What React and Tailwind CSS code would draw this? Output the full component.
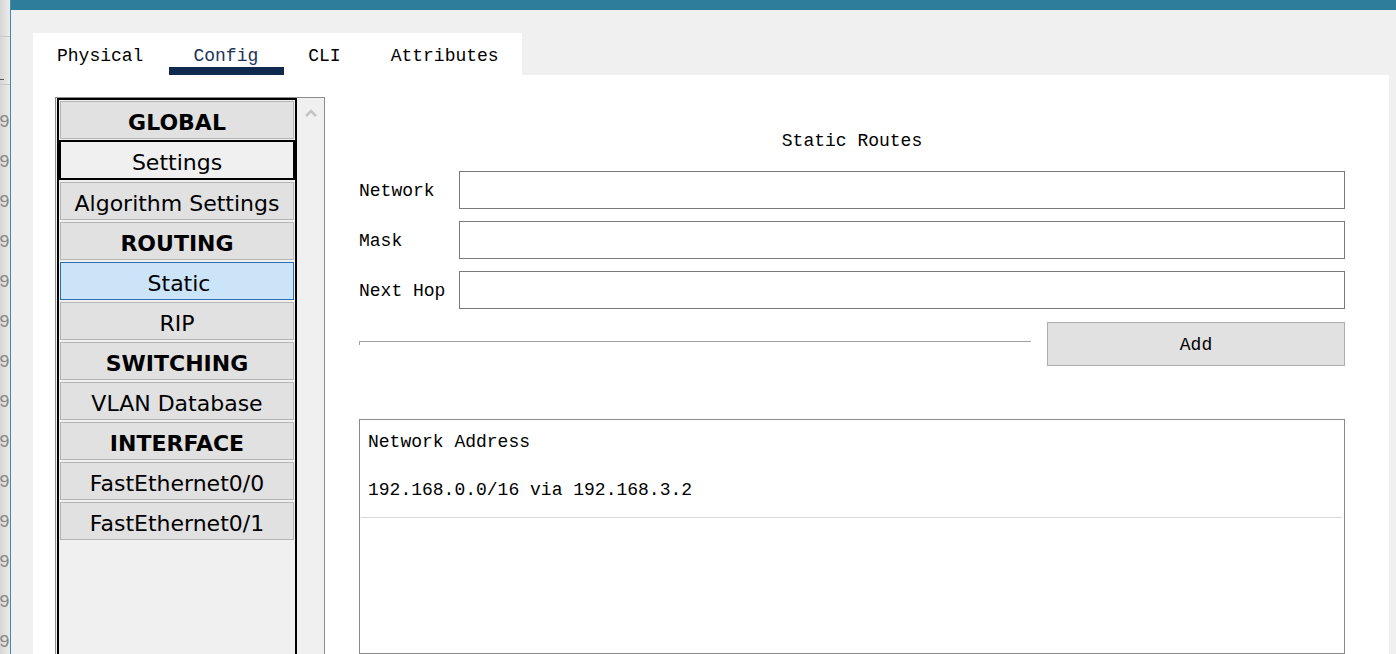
import React from 'react';

const mono = "font-['Liberation_Mono',monospace]";
const sans = "font-['DejaVu_Sans',sans-serif]";

const tabs = ['Physical', 'Config', 'CLI', 'Attributes'];

const navItems = [
  { label: 'GLOBAL', kind: 'header' },
  { label: 'Settings', kind: 'selected' },
  { label: 'Algorithm Settings' },
  { label: 'ROUTING', kind: 'header' },
  { label: 'Static', kind: 'active' },
  { label: 'RIP' },
  { label: 'SWITCHING', kind: 'header' },
  { label: 'VLAN Database' },
  { label: 'INTERFACE', kind: 'header' },
  { label: 'FastEthernet0/0' },
  { label: 'FastEthernet0/1' },
];

const sideDigits = ['96', '91', '92', '93', '94', '95', '96', '97', '98', '99', '90', '91', '92', '93'];

const NavItem = ({ label, kind }) => {
  if (kind === 'selected') {
    return (
      <div className={`mt-[1px] flex h-[40px] items-center justify-center border-2 border-black bg-[#f0f0f0] pt-[4px] text-[22px] text-black ${sans}`}>
        {label}
      </div>
    );
  }
  if (kind === 'active') {
    return (
      <div className={`mx-[1px] mt-[2px] flex h-[38px] items-center justify-center border border-[#2f6fb0] bg-[#cce4f7] pl-[4px] pt-[4px] text-[22px] text-black ${sans}`}>
        {label}
      </div>
    );
  }
  return (
    <div
      className={`mx-[1px] flex h-[38px] items-center justify-center border border-[#b4b4b4] bg-[#e1e1e1] pt-[4px] text-[22px] text-black ${sans} ${
        kind === 'header' ? 'font-bold' : ''
      } ${label === 'GLOBAL' ? 'mt-[1px]' : 'mt-[2px]'}`}
    >
      {label}
    </div>
  );
};

const FieldRow = ({ label }) => (
  <div className="flex h-[38px] items-center">
    <div className={`w-[100px] pt-[3px] text-[18px] text-black ${mono}`}>{label}</div>
    <div className="h-full flex-1 border border-[#7a7a7a] bg-white" />
  </div>
);

export default function App() {
  return (
    <div className="flex h-[654px] w-[1396px] overflow-hidden bg-[#f0f0f0]">
      {/* window behind, cut off at the left */}
      <div className="relative w-[10px] shrink-0 overflow-hidden bg-gradient-to-r from-[#d6d6d6] to-[#ececec]">
        <div className="mt-[36px] h-[1px] bg-[#c8c8c8]" />
        <div className="mt-[42px] ml-0 h-[1px] w-[4px] bg-[#555]" />
        <div className="mt-[4px] h-[1px] bg-[#c8c8c8]" />
        <div className={`-ml-[1px] mt-[17px] flex flex-col text-[18px] leading-[40px] text-[#8a8a8a] ${mono}`}>
          {sideDigits.map((d, i) => (
            <span key={i} className="whitespace-nowrap">{d}</span>
          ))}
        </div>
      </div>

      {/* main window */}
      <div className="flex min-w-0 flex-1 flex-col border-l border-[#3c8eb0]">
        <div className="h-[10px] shrink-0 bg-[#2e7d9b]" />
        <div className="flex min-h-0 flex-1 flex-col pl-[22px] pr-[7px] pt-[23px]">
          {/* tabs */}
          <div className="flex h-[42px] w-[489px] shrink-0 bg-white">
            {tabs.map((t) => (
              <div key={t} className="flex flex-col pl-6 pr-[26px]">
                <div
                  className={`flex h-[34px] items-center pt-[11px] text-[18px] leading-[24px] ${mono} ${
                    t === 'Config' ? 'text-[#1b3457]' : 'text-black'
                  }`}
                >
                  {t}
                </div>
                <div className={`-ml-6 -mr-[26px] h-[8px] ${t === 'Config' ? 'bg-[#0f2a4e]' : ''}`} />
              </div>
            ))}
          </div>

          {/* content */}
          <div className="flex min-h-0 flex-1 overflow-hidden bg-white pl-[22px] pt-[22px]">
            {/* left nav */}
            <div className="flex h-[600px] w-[270px] shrink-0 border border-[#8c8c8c] bg-[#f0f0f0] pl-[1px]">
              <div className="flex w-[240px] flex-col border-2 border-black bg-[#f0f0f0]">
                {navItems.map((it) => (
                  <NavItem key={it.label} {...it} />
                ))}
              </div>
              <div className="flex flex-1 justify-center pt-[10px]">
                <svg width="14" height="10" viewBox="0 0 14 10">
                  <polyline points="2,8 7,3 12,8" fill="none" stroke="#c4c4c4" strokeWidth="2.5" />
                </svg>
              </div>
            </div>

            {/* right form */}
            <div className="ml-[34px] mr-[44px] flex min-w-0 flex-1 flex-col pt-[32px]">
              <div className={`h-[24px] text-center text-[18px] leading-[24px] text-black ${mono}`}>Static Routes</div>
              <div className="mt-[18px] flex flex-col gap-[12px]">
                <FieldRow label="Network" />
                <FieldRow label="Mask" />
                <FieldRow label="Next Hop" />
              </div>
              <div className="mt-[13px] flex h-[44px] items-start">
                <div className="mt-[19px] flex h-[4px] flex-1 border-l border-t border-[#a0a0a0]" />
                <button className={`ml-[16px] h-[44px] w-[298px] border border-[#adadad] bg-[#e1e1e1] pt-[2px] text-[18px] text-black ${mono}`}>
                  Add
                </button>
              </div>
              <div className="mt-[53px] h-[300px] border border-[#8a8a8a] bg-white">
                <div className={`pl-[8px] pt-[10px] text-[18px] leading-[24px] text-black ${mono}`}>Network Address</div>
                <div className={`mt-[24px] pl-[8px] text-[18px] leading-[24px] text-black ${mono}`}>
                  192.168.0.0/16 via 192.168.3.2
                </div>
                <div className="ml-[1px] mr-[2px] mt-[15px] h-[1px] bg-[#d9d9d9]" />
              </div>
            </div>
          </div>
        </div>
      </div>
    </div>
  );
}
